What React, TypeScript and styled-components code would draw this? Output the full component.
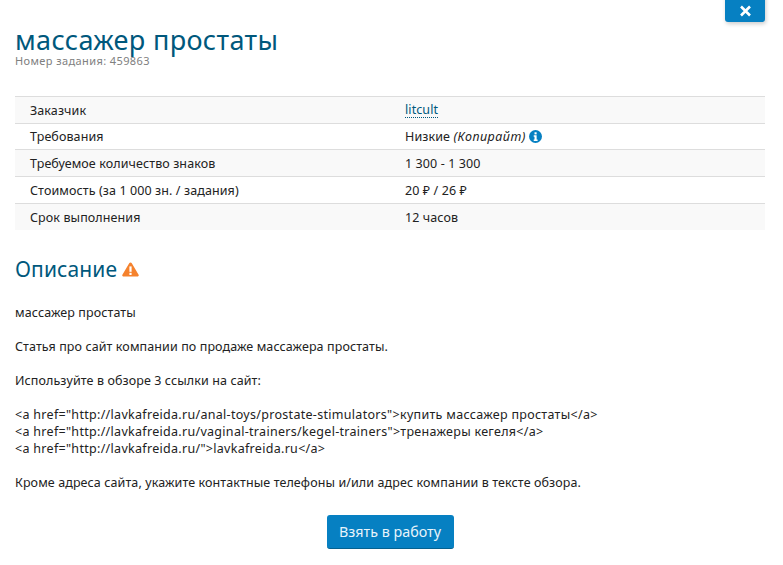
import React from "react";
import styled, { createGlobalStyle } from "styled-components";

const Global = createGlobalStyle`
  html, body { margin: 0; padding: 0; background: #fff; }
  body { font-family: "Noto Sans", "Open Sans", sans-serif; font-size: 12.5px; letter-spacing: 0.1px; color: #222; }
`;

const Page = styled.div`
  position: relative;
  width: 783px;
  height: 565px;
  padding: 0 18px 0 15px;
  box-sizing: border-box;
  overflow: hidden;
`;

const CloseButton = styled.button`
  position: absolute;
  top: -8px;
  right: 18px;
  width: 40px;
  height: 30px;
  padding: 7px 0 0;
  border: 0;
  border-radius: 0 0 3px 3px;
  background: #0680c2;
  box-shadow: 1px 2px 4px rgba(0, 0, 0, 0.2);
  display: flex;
  align-items: center;
  justify-content: center;
`;

const Title = styled.h1`
  margin: 0;
  padding-top: 25px;
  font-size: 27px;
  letter-spacing: 0.35px;
  line-height: 30px;
  font-weight: 400;
  color: #00587c;
`;

const TaskNumber = styled.div`
  font-size: 11px;
  letter-spacing: 0.4px;
  line-height: 12px;
  color: #808080;
`;

const Table = styled.div`
  margin-top: 29px;
  border-top: 1px solid #ddd;
`;

const Row = styled.div<{ $odd: boolean }>`
  display: grid;
  grid-template-columns: 375px 1fr;
  height: 26.65px;
  box-sizing: border-box;
  align-items: center;
  padding: 1px 0 0 15px;
  background: ${(p) => (p.$odd ? "#f9f9f9" : "#fff")};
  border-bottom: 1px solid #ddd;
  &:last-child { border-bottom: 0; }
`;

const Cell = styled.div`
  display: flex;
  align-items: center;
  white-space: pre;
`;

const UserLink = styled.a`
  color: #00587c;
  border-bottom: 1px dotted #00587c;
  line-height: 14px;
`;

const Category = styled.i`
  letter-spacing: 0.5px;
`;

const InfoIcon = styled.svg`
  width: 13px;
  height: 13px;
  margin-left: 3px;
`;

const SectionTitle = styled.h2`
  display: flex;
  align-items: center;
  margin: 25px 0 0;
  font-size: 21px;
  line-height: 28px;
  font-weight: 400;
  color: #00587c;
`;

const WarnIcon = styled.svg`
  width: 17px;
  height: 15px;
  margin-left: 5px;
`;

const Description = styled.div`
  margin-top: 21px;
  line-height: 17px;
  white-space: pre-line;
`;

const MarkupLine = styled.div`
  letter-spacing: 0.3px;
`;

const Actions = styled.div`
  display: flex;
  justify-content: center;
  margin-top: 24px;
`;

const TakeButton = styled.button`
  width: 127px;
  height: 34px;
  border: 0;
  border-radius: 3px;
  background: #0680c2;
  border-bottom: 1px solid #05618f;
  color: #e8f4fb;
  font-family: inherit;
  font-size: 14.3px;
`;

const rows: [string, React.ReactNode][] = [
  ["Заказчик", <UserLink key="u">litcult</UserLink>],
  [
    "Требования",
    <React.Fragment key="r">
      Низкие <Category>(Копирайт)</Category>
      <InfoIcon viewBox="0 0 16 16">
        <circle cx="8" cy="8" r="8" fill="#0680c2" />
        <rect x="6.8" y="2.8" width="2.6" height="2.6" fill="#fff" />
        <path d="M5.8 6.6h3.6v5h1.2v1.8H5.8v-1.8h1v-3.2h-1z" fill="#fff" />
      </InfoIcon>
    </React.Fragment>,
  ],
  ["Требуемое количество знаков", "1 300 - 1 300"],
  ["Стоимость (за 1 000 зн. / задания)", "20 ₽ / 26 ₽"],
  ["Срок выполнения", "12 часов"],
];

const markup = [
  '<a href="http://lavkafreida.ru/anal-toys/prostate-stimulators">купить массажер простаты</a>',
  '<a href="http://lavkafreida.ru/vaginal-trainers/kegel-trainers">тренажеры кегеля</a>',
  '<a href="http://lavkafreida.ru/">lavkafreida.ru</a>',
];

export default function App() {
  return (
    <Page>
      <Global />
      <CloseButton aria-label="Закрыть">
        <svg width="13" height="12" viewBox="0 0 13 12">
          <path d="M2 1.5l9 9M11 1.5l-9 9" stroke="#fff" strokeWidth="2.6" />
        </svg>
      </CloseButton>
      <Title>массажер простаты</Title>
      <TaskNumber>Номер задания: 459863</TaskNumber>
      <Table>
        {rows.map(([label, value], i) => (
          <Row key={label} $odd={i % 2 === 0}>
            <Cell>{label}</Cell>
            <Cell>{value}</Cell>
          </Row>
        ))}
      </Table>
      <SectionTitle>
        Описание
        <WarnIcon viewBox="0 0 17 15">
          <path d="M8.5 0.5c.6 0 1 .3 1.3.8l6.8 11.4c.5.9-.1 1.9-1.1 1.9H1.5c-1 0-1.6-1-1.1-1.9L7.2 1.3c.3-.5.7-.8 1.3-.8z" fill="#f5822d" />
          <rect x="7.4" y="4.4" width="2.2" height="5.4" fill="#fff" />
          <rect x="7.4" y="10.8" width="2.2" height="2.2" fill="#fff" />
        </WarnIcon>
      </SectionTitle>
      <Description>
        {"массажер простаты\n\nСтатья про сайт компании по продаже массажера простаты.\n\nИспользуйте в обзоре 3 ссылки на сайт:\n\n"}
        {markup.map((line) => (
          <MarkupLine key={line}>{line}</MarkupLine>
        ))}
        {"\nКроме адреса сайта, укажите контактные телефоны и/или адрес компании в тексте обзора."}
      </Description>
      <Actions>
        <TakeButton>Взять в работу</TakeButton>
      </Actions>
    </Page>
  );
}
